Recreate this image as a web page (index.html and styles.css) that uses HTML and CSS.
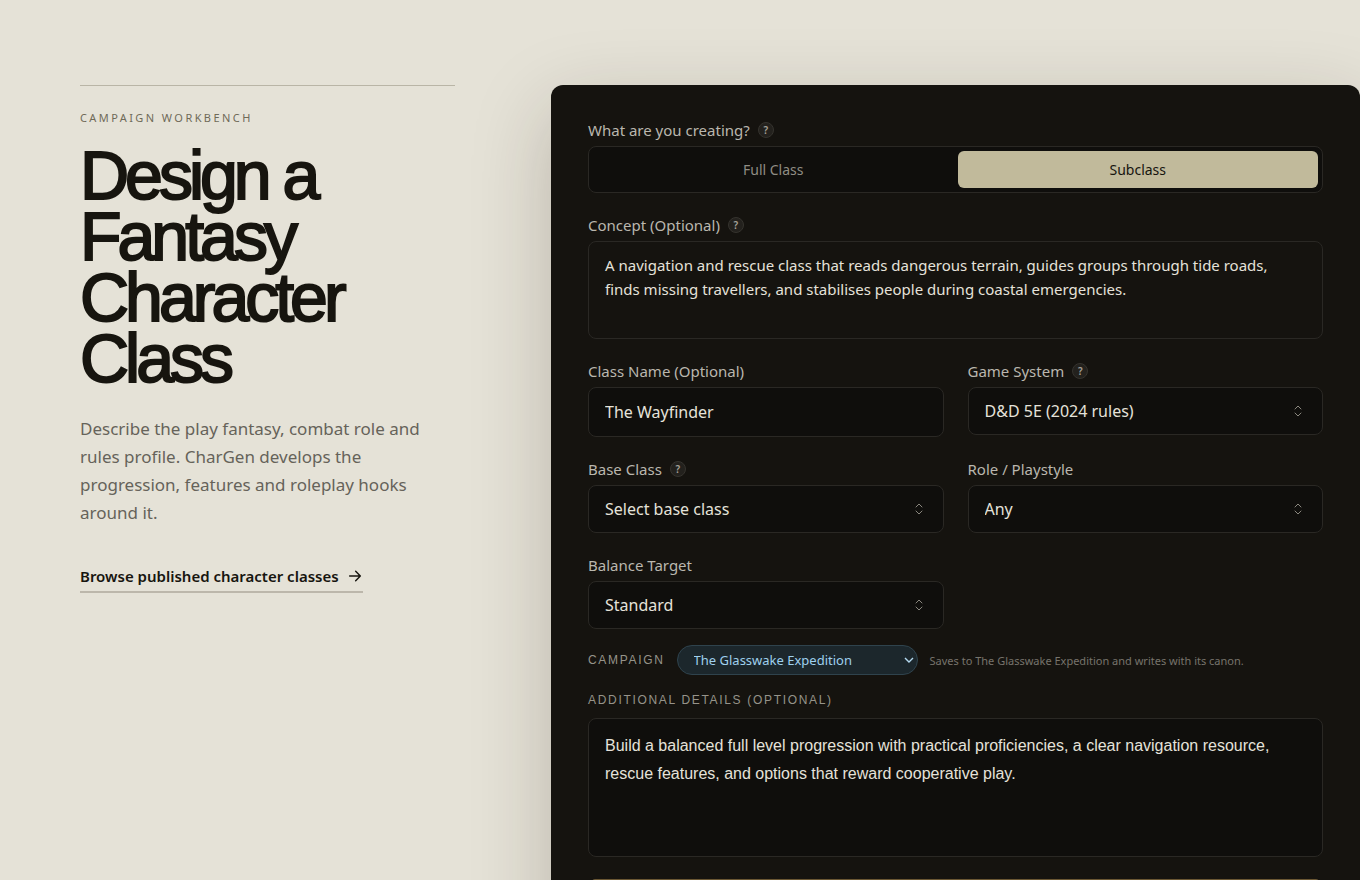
FILE: index.html
```html
<!DOCTYPE html>
<html lang="en">
  <head>
    <meta charset="UTF-8" />
    <meta name="viewport" content="width=device-width, initial-scale=1.0" />
    <title>Design a Fantasy Character Class</title>
    <link rel="stylesheet" href="styles.css">
  </head>
  <body>
    <main class="workbench">
      <section class="intro">
        <p class="kicker">Campaign Workbench</p>
        <h1>Design a Fantasy Character Class</h1>
        <p class="lead">
          Describe the play fantasy, combat role and rules profile. CharGen
          develops the progression, features and roleplay hooks around it.
        </p>
        <a class="browse-link" href="#">
          Browse published character classes
          <svg width="16" height="16" viewBox="0 0 24 24" fill="none" stroke="currentColor" stroke-width="2.2" stroke-linecap="round" stroke-linejoin="round">
            <path d="M4 12h16M13 5l7 7-7 7" />
          </svg>
        </a>
      </section>

      <form class="panel">
        <div class="field">
          <div class="label-row">
            <span class="label" id="kind-label">What are you creating?</span>
            <button class="help" type="button">?</button>
          </div>
          <div class="toggle" role="group" aria-labelledby="kind-label">
            <button class="toggle-option" type="button">Full Class</button>
            <button class="toggle-option active" type="button">Subclass</button>
          </div>
        </div>

        <div class="field">
          <div class="label-row">
            <label class="label" for="concept">Concept (Optional)</label>
            <button class="help" type="button">?</button>
          </div>
          <textarea class="control concept" id="concept">A navigation and rescue class that reads dangerous terrain, guides groups through tide roads, finds missing travellers, and stabilises people during coastal emergencies.</textarea>
        </div>

        <div class="field-grid">
          <div class="field">
            <div class="label-row">
              <label class="label" for="class-name">Class Name (Optional)</label>
            </div>
            <input class="control text-input" id="class-name" type="text" value="The Wayfinder" />
          </div>

          <div class="field">
            <div class="label-row">
              <label class="label" for="game-system">Game System</label>
              <button class="help" type="button">?</button>
            </div>
            <div class="select-wrap">
              <select class="control" id="game-system">
                <option>D&amp;D 5E (2024 rules)</option>
              </select>
              <svg class="updown" width="8" height="12" viewBox="0 0 8 12" fill="none" stroke="currentColor" stroke-linecap="round" stroke-linejoin="round">
                <path d="M1 4l3-3 3 3M1 8l3 3 3-3" />
              </svg>
            </div>
          </div>

          <div class="field">
            <div class="label-row">
              <label class="label" for="base-class">Base Class</label>
              <button class="help" type="button">?</button>
            </div>
            <div class="select-wrap">
              <select class="control" id="base-class">
                <option>Select base class</option>
              </select>
              <svg class="updown" width="8" height="12" viewBox="0 0 8 12" fill="none" stroke="currentColor" stroke-linecap="round" stroke-linejoin="round">
                <path d="M1 4l3-3 3 3M1 8l3 3 3-3" />
              </svg>
            </div>
          </div>

          <div class="field">
            <div class="label-row">
              <label class="label" for="role">Role / Playstyle</label>
            </div>
            <div class="select-wrap">
              <select class="control" id="role">
                <option>Any</option>
              </select>
              <svg class="updown" width="8" height="12" viewBox="0 0 8 12" fill="none" stroke="currentColor" stroke-linecap="round" stroke-linejoin="round">
                <path d="M1 4l3-3 3 3M1 8l3 3 3-3" />
              </svg>
            </div>
          </div>

          <div class="field">
            <div class="label-row">
              <label class="label" for="balance">Balance Target</label>
            </div>
            <div class="select-wrap">
              <select class="control" id="balance">
                <option>Standard</option>
              </select>
              <svg class="updown" width="8" height="12" viewBox="0 0 8 12" fill="none" stroke="currentColor" stroke-linecap="round" stroke-linejoin="round">
                <path d="M1 4l3-3 3 3M1 8l3 3 3-3" />
              </svg>
            </div>
          </div>
        </div>

        <div class="campaign">
          <label class="caps" for="campaign">Campaign</label>
          <div class="select-wrap">
            <select class="pill" id="campaign">
              <option>The Glasswake Expedition</option>
            </select>
            <svg class="pill-arrow" width="10" height="6" viewBox="0 0 10 6" fill="none" stroke="currentColor" stroke-width="1.4">
              <path d="M1 1l4 4 4-4" />
            </svg>
          </div>
          <span class="hint">Saves to The Glasswake Expedition and writes with its canon.</span>
        </div>

        <div class="details-field">
          <label class="caps" for="details">Additional Details (Optional)</label>
          <textarea class="control details" id="details">Build a balanced full level progression with practical proficiencies, a clear navigation resource, rescue features, and options that reward cooperative play.</textarea>
        </div>

        <button class="submit" type="submit"></button>
      </form>
    </main>
  </body>
</html>
```

FILE: styles.css
```css
* {
  box-sizing: border-box;
}

body {
  margin: 0;
  background-color: #e5e2d7;
  color: #17150f;
  font-family: "Noto Sans", "Open Sans", sans-serif;
}

button,
input,
select,
textarea {
  font-family: inherit;
}

.workbench {
  display: grid;
  grid-template-columns: minmax(0, 375fr) minmax(0, 809fr);
  gap: 96px;
  align-items: start;
  padding: 85px 0 80px 80px;
}

/* Left column */

.intro {
  border-top: 1px solid #b9b5a6;
  padding-top: 24px;
}

.kicker {
  margin: 0;
  font-size: 11px;
  line-height: 16px;
  letter-spacing: 0.22em;
  text-transform: uppercase;
  color: #6f6a58;
}

h1 {
  margin: 19px 0 0;
  font-family: "Liberation Sans", Arial, sans-serif;
  font-size: 68px;
  font-weight: 400;
  line-height: 61px;
  letter-spacing: -4px;
  -webkit-text-stroke: 2px #17150f;
}

.lead {
  margin: 26px 0 0;
  font-size: 17px;
  line-height: 28px;
  color: #66635a;
}

.browse-link {
  display: inline-flex;
  align-items: center;
  gap: 8px;
  margin-top: 37px;
  padding-bottom: 3px;
  border-bottom: 2px solid #bcb7ab;
  font-size: 15px;
  font-weight: 600;
  line-height: 24px;
  color: #17150f;
  text-decoration: none;
}

/* Form panel */

.panel {
  padding: 33px 37px;
  border-radius: 12px;
  background-color: #15130f;
  box-shadow: 0 24px 80px rgba(40, 28, 18, 0.22);
}

.field {
  margin-bottom: 20px;
}

.label-row {
  display: flex;
  align-items: center;
  gap: 8px;
  height: 24px;
  margin-bottom: 4px;
}

.label {
  font-size: 15px;
  line-height: 24px;
  color: #bab7ae;
}

.help {
  width: 16px;
  height: 16px;
  padding: 0;
  border: 1px solid #35332e;
  border-radius: 50%;
  background-color: #23211d;
  color: #a5a299;
  font-size: 10px;
  font-weight: 600;
  line-height: 14px;
  text-align: center;
}

.toggle {
  display: grid;
  grid-template-columns: 1fr 1fr;
  gap: 4px;
  padding: 4px;
  border: 1px solid #2a2824;
  border-radius: 8px;
  background-color: #0f0e0c;
}

.toggle-option {
  height: 37px;
  padding: 0;
  border: 0;
  border-radius: 6px;
  background: none;
  color: #908d84;
  font-size: 14px;
}

.toggle-option.active {
  background-color: #c1ba9b;
  color: #17150f;
}

.control {
  display: block;
  width: 100%;
  height: 48px;
  padding: 0 16px;
  border: 1px solid #2a2824;
  border-radius: 8px;
  background-color: #0f0e0c;
  color: #e5e2da;
  font-size: 16px;
  appearance: none;
  outline: none;
  resize: none;
}

.concept {
  height: 98px;
  padding: 11px 16px;
  background-color: #15130f;
  font-size: 15px;
  line-height: 24px;
}

.text-input {
  height: 50px;
}

.field-grid {
  display: grid;
  grid-template-columns: 1fr 1fr;
  column-gap: 24px;
}

.select-wrap {
  position: relative;
}

.updown {
  position: absolute;
  top: 18px;
  right: 21px;
  color: #8a877f;
  pointer-events: none;
}

/* Campaign row */

.campaign {
  display: flex;
  align-items: center;
  gap: 12px;
  margin-top: -4px;
}

.caps {
  font-family: "Liberation Sans", Arial, sans-serif;
  font-size: 12px;
  line-height: 18px;
  letter-spacing: 0.14em;
  text-transform: uppercase;
  color: #96938a;
}

.pill {
  display: block;
  width: 241px;
  height: 30px;
  padding: 0 16px;
  border: 1px solid #2f434d;
  border-radius: 15px;
  background-color: #1c272c;
  color: #9fd0ee;
  font-size: 13px;
  appearance: none;
}

.pill-arrow {
  position: absolute;
  top: 12px;
  right: 4px;
  color: #b5daf0;
  pointer-events: none;
}

.hint {
  font-size: 11px;
  color: #77746c;
}

.details-field {
  display: grid;
  gap: 9px;
  margin-top: 16px;
}

.details {
  height: 139px;
  padding: 13px 16px;
  font-family: "Liberation Sans", Arial, sans-serif;
  line-height: 28px;
}

.submit {
  display: block;
  width: 100%;
  height: 52px;
  margin-top: 22px;
  border: 1px solid #6b5733;
  border-radius: 8px;
  background-color: #c1ba9b;
}
```
